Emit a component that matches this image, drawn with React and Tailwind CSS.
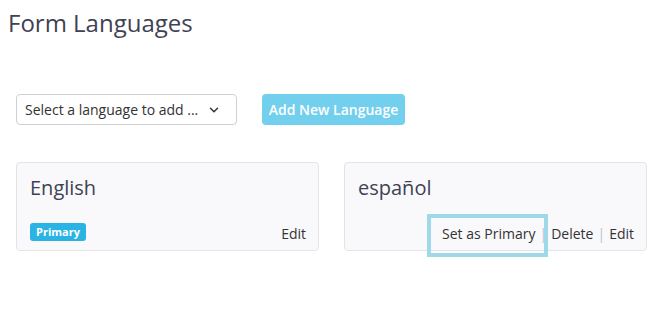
import React from "react";

function Chevron() {
  return (
    <svg width="14" height="14" viewBox="0 0 24 24" fill="none" stroke="#333" strokeWidth="2.5" strokeLinecap="round" strokeLinejoin="round">
      <path d="M6 9l6 6 6-6" />
    </svg>
  );
}

export default function App() {
  return (
    <div className="w-[667px] h-[326px] bg-white text-[#333344]" style={{ fontFamily: '"Open Sans", sans-serif' }}>
      <h1 className="pl-[8px] pt-[5px] text-[24px] leading-[36px] text-[#3f4254]">Form Languages</h1>
      <div className="ml-[16px] mt-[53px] flex items-center gap-[25px]">
        <div className="w-[221px] h-[31px] border border-[#cfd0d6] rounded-[4px] flex items-center justify-between pl-[8px] pr-[15px] text-[14px] text-[#333]">
          <span>Select a language to add ...</span>
          <Chevron />
        </div>
        <button className="h-[31px] w-[143px] rounded-[4px] bg-[#72cfee] text-white text-[14px] font-semibold">Add New Language</button>
      </div>
      <div className="ml-[16px] mt-[37px] grid grid-cols-[303px_303px] gap-[25px]">
        <div className="h-[89px] border border-[#e3e3e8] bg-[#f9f9fb] rounded-[4px] pl-[13px] pr-[12px] pt-[10px] flex flex-col justify-between pb-[6px]">
          <div className="text-[20px] leading-[30px] text-[#3f4254]">English</div>
          <div className="flex items-end justify-between h-[21px]">
            <span className="bg-[#2ab3e3] text-white text-[11px] font-bold rounded-[3px] px-[6px] h-[18px] leading-[18px] mb-[3px]">Primary</span>
            <span className="text-[14px] leading-[21px] text-[#333]">Edit</span>
          </div>
        </div>
        <div className="h-[89px] border border-[#e3e3e8] bg-[#f9f9fb] rounded-[4px] pl-[13px] pr-[12px] pt-[10px] flex flex-col justify-between pb-[6px]">
          <div className="text-[20px] leading-[30px] text-[#3f4254]">español</div>
          <div className="flex items-center justify-end text-[14px] leading-[21px] text-[#333] h-[21px]">
            <span className="relative">
              Set as Primary
              <span className="absolute left-[-15px] right-[-13px] top-[-9px] bottom-[-13px] border-[4px] border-[#9fd9e8]"></span>
            </span>
            <span className="mx-[4px] text-[#b7c4d6]">|</span>
            <span>Delete</span>
            <span className="mx-[4px] text-[#b7c4d6]">|</span>
            <span>Edit</span>
          </div>
        </div>
      </div>
    </div>
  );
}
